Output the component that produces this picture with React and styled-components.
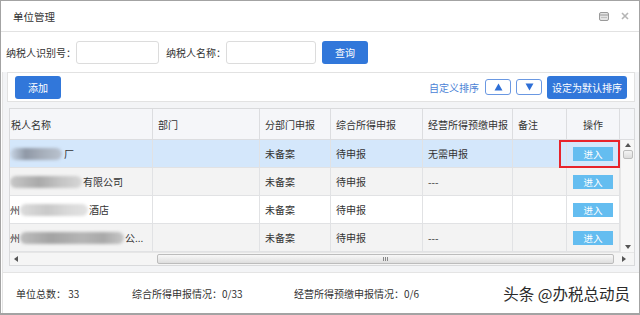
import React from "react";
import styled, { createGlobalStyle } from "styled-components";

const GlobalStyle = createGlobalStyle`
  html, body { margin: 0; padding: 0; background: #fff; }
  body { font-family: "Noto Sans CJK SC", "Noto Sans", sans-serif; }
  * { box-sizing: border-box; }
`;

const Frame = styled.div`
  width: 640px;
  height: 315px;
  border: 1px solid #a3a3a3;
  border-bottom-width: 2px;
  background: #fff;
  display: flex;
  flex-direction: column;
  color: #333;
  font-size: 10px;
  overflow: hidden;
`;

const TitleBar = styled.div`
  height: 31px;
  flex: none;
  border-bottom: 1px solid #e2e2e2;
  display: flex;
  align-items: center;
  justify-content: space-between;
  padding: 0 10px 0 12px;
`;

const Title = styled.span`
  font-size: 10.5px;
  color: #333;
`;

const TitleIcons = styled.div`
  display: flex;
  align-items: center;
  gap: 12px;
`;

const SearchRow = styled.div`
  height: 40px;
  flex: none;
  display: flex;
  align-items: center;
  padding: 0 5px;
`;

const Label = styled.span`
  font-size: 10px;
  color: #333;
  margin-left: ${(p) => p.$ml || 0}px;
`;

const Input = styled.div`
  width: ${(p) => p.$w}px;
  height: 23px;
  border: 1px solid #dcdcdc;
  border-radius: 3px;
  background: #fff;
`;

const BlueButton = styled.button`
  height: 23px;
  padding: 0 ${(p) => p.$px || 14}px;
  margin-left: ${(p) => p.$ml || 0}px;
  border: none;
  border-radius: 3px;
  background: #3177da;
  color: #fff;
  font-family: inherit;
  font-size: 10px;
  line-height: 23px;
`;

const Content = styled.div`
  flex: 1;
  display: flex;
  flex-direction: column;
  margin-left: 1px;
  border-left: 1px solid #e4e4e4;
  background: #f3f4f6;
`;

const Toolbar = styled.div`
  height: 30px;
  flex: none;
  margin: 0 4px 0 4px;
  border: 1px solid #e2e2e2;
  background: #fff;
  display: flex;
  align-items: center;
  padding: 0 7px;
`;

const Spacer = styled.div`
  flex: 1;
`;

const SortLabel = styled.span`
  color: #4b82d6;
  font-size: 10px;
  margin-right: 6px;
`;

const ArrowButton = styled.div`
  width: 26px;
  height: 16px;
  border: 1px solid #6a98e2;
  border-radius: 3px;
  background: #fff;
  display: flex;
  align-items: center;
  justify-content: center;
  margin-right: 5px;
`;

const TableBox = styled.div`
  margin: 6px 4px 0 6px;
  height: 158px;
  flex: none;
  border: 1px solid #d9dadc;
  background: #fff;
  display: flex;
  flex-direction: column;
`;

const HeadRow = styled.div`
  height: 31px;
  flex: none;
  display: flex;
  background: #f5f6f9;
  border-bottom: 1px solid #dcdde0;
`;

const HeadCell = styled.div`
  width: ${(p) => p.$w}px;
  flex: none;
  border-right: 1px solid #dcdde0;
  display: flex;
  align-items: center;
  justify-content: ${(p) => (p.$center ? "center" : "flex-start")};
  padding-left: ${(p) => (p.$center ? 0 : p.$pl ?? 5)}px;
  white-space: nowrap;
  overflow: hidden;
  font-size: 10px;
  color: #333;
`;

const Body = styled.div`
  flex: 1;
  display: flex;
  min-height: 0;
`;

const Rows = styled.div`
  width: 610px;
  flex: none;
  display: flex;
  flex-direction: column;
`;

const Row = styled.div`
  height: 28px;
  flex: none;
  display: flex;
  background: ${(p) => p.$bg};
  border-bottom: 1px solid #e1e2e4;
`;

const Cell = styled.div`
  width: ${(p) => p.$w}px;
  flex: none;
  border-right: 1px solid #e1e2e4;
  display: flex;
  align-items: center;
  justify-content: ${(p) => (p.$center ? "center" : "flex-start")};
  padding-left: ${(p) => (p.$center ? 0 : p.$pl ?? 5)}px;
  white-space: nowrap;
  overflow: ${(p) => (p.$visible ? "visible" : "hidden")};
  position: relative;
  font-size: 10px;
  color: #333;
`;

const Blur = styled.span`
  display: inline-block;
  width: ${(p) => p.$w}px;
  height: 12px;
  border-radius: 6px;
  background: ${(p) => p.$bg};
  filter: blur(1.6px);
  flex: none;
`;

const Gap = styled.span`
  display: inline-block;
  width: ${(p) => p.$w}px;
  height: ${(p) => p.$h || 0}px;
  flex: none;
`;

const EnterButton = styled.div`
  width: 40px;
  height: 14px;
  background: #64bdf0;
  color: #fff;
  font-size: 9.5px;
  line-height: 14px;
  text-align: center;
`;

const RedBox = styled.div`
  position: absolute;
  left: -8px;
  top: 0px;
  width: 61px;
  height: 28px;
  border: 2px solid #e8232b;
  pointer-events: none;
`;

const VScroll = styled.div`
  width: 14px;
  flex: none;
  background: #f7f7f7;
  border-left: 1px solid #e6e6e6;
  display: flex;
  flex-direction: column;
  align-items: center;
  padding: 3px 0;
`;

const Thumb = styled.div`
  width: 10px;
  height: ${(p) => p.$h}px;
  border: 1px solid #bcbcbc;
  border-radius: 2px;
  background: linear-gradient(#f4f4f4, #dcdcdc);
`;

const HScroll = styled.div`
  height: 13px;
  flex: none;
  display: flex;
  align-items: center;
  background: #f5f5f5;
  border-top: 1px solid #e6e6e6;
  padding: 0 4px;
`;

const HThumb = styled.div`
  margin-left: 139px;
  width: 457px;
  height: 10px;
  border: 1px solid #bcbcbc;
  border-radius: 2px;
  background: linear-gradient(#f8f8f8, #dedede);
  display: flex;
  align-items: center;
  justify-content: center;
`;

const Footer = styled.div`
  margin-top: 6px;
  flex: 1;
  background: #fff;
  border-top: 1px solid #e4e4e4;
  display: flex;
  align-items: center;
  padding: 0 0 0 13px;
`;

const Stat = styled.span`
  font-size: 10px;
  color: #333;
  width: ${(p) => p.$w}px;
  flex: none;
`;

const Watermark = styled.span`
  margin-left: auto;
  margin-right: 9px;
  font-size: 15.5px;
  color: #2b2b2b;
  text-shadow: 0 0 2px #fff;
`;

const COLS = [143, 107, 71, 92, 90, 54, 53];

const Tri = ({ up }) => (
  <svg width="9" height="8" viewBox="0 0 9 8">
    <path d={up ? "M4.5 0.5 L8.5 7.5 L0.5 7.5 Z" : "M0.5 0.5 L8.5 0.5 L4.5 7.5 Z"} fill="#2e6fd6" />
  </svg>
);

const SmallTri = ({ dir }) => {
  const d = {
    up: "M0 4 L3 0 L6 4 Z",
    down: "M0 0 L6 0 L3 4 Z",
    left: "M4 0 L4 6 L0 3 Z",
    right: "M0 0 L0 6 L4 3 Z",
  }[dir];
  const w = dir === "left" || dir === "right" ? 4 : 6;
  const h = dir === "left" || dir === "right" ? 6 : 4;
  return (
    <svg width={w} height={h} viewBox={`0 0 ${w} ${h}`}>
      <path d={d} fill="#555" />
    </svg>
  );
};

const rows = [
  {
    bg: "#d4e7fb",
    name: (
      <>
        <Blur $w={52} $bg="linear-gradient(90deg,#c9d6e6,#8f98a6 30%,#a5adb9 60%,#b9c2cf)" />
        <Gap $w={2} />
        <span>厂</span>
      </>
    ),
    c3: "未备案",
    c4: "待申报",
    c5: "无需申报",
    sel: true,
  },
  {
    bg: "#f3f3f3",
    name: (
      <>
        <Blur $w={72} $bg="linear-gradient(90deg,#c8c8c8,#a9a9a9 40%,#c4c4c4 70%,#d6d6d6)" />
        <Gap $w={1} />
        <span>有限公司</span>
      </>
    ),
    c3: "未备案",
    c4: "待申报",
    c5: "---",
  },
  {
    bg: "#ffffff",
    name: (
      <>
        <span>州</span>
        <Blur $w={68} $bg="linear-gradient(90deg,#dcdcdc,#c9c9c9 40%,#d9d9d9 70%,#e2e2e2)" />
        <Gap $w={1} />
        <span>酒店</span>
      </>
    ),
    c3: "未备案",
    c4: "待申报",
    c5: "",
  },
  {
    bg: "#f3f3f3",
    name: (
      <>
        <span>州</span>
        <Blur $w={104} $bg="linear-gradient(90deg,#bdbdbd,#a3a3a3 30%,#b5b5b5 60%,#a9a9a9 80%,#c7c7c7)" />
        <Gap $w={1} />
        <span>公...</span>
      </>
    ),
    c3: "未备案",
    c4: "待申报",
    c5: "---",
  },
];

export default function App() {
  return (
    <>
      <GlobalStyle />
      <Frame>
        <TitleBar>
          <Title>单位管理</Title>
          <TitleIcons>
            <svg width="10" height="9" viewBox="0 0 10 9">
              <rect x="0.5" y="0.5" width="9" height="8" rx="1.5" fill="#e4e4e4" stroke="#9a9a9a" />
              <line x1="1" y1="3" x2="9" y2="3" stroke="#9a9a9a" />
              <line x1="2" y1="5.5" x2="8" y2="5.5" stroke="#c2c2c2" />
            </svg>
            <svg width="8" height="8" viewBox="0 0 8 8">
              <path d="M1 1 L7 7 M7 1 L1 7" stroke="#b5b5b5" strokeWidth="1.6" />
            </svg>
          </TitleIcons>
        </TitleBar>

        <SearchRow>
          <Label>纳税人识别号：</Label>
          <Input $w={83} />
          <Label $ml={7}>纳税人名称：</Label>
          <Input $w={90} />
          <BlueButton $ml={6} $px={13}>查询</BlueButton>
        </SearchRow>

        <Content>
          <Toolbar>
            <BlueButton $px={13}>添加</BlueButton>
            <Spacer />
            <SortLabel>自定义排序</SortLabel>
            <ArrowButton><Tri up /></ArrowButton>
            <ArrowButton><Tri /></ArrowButton>
            <BlueButton $px={5}>设定为默认排序</BlueButton>
          </Toolbar>

          <TableBox>
            <HeadRow>
              <HeadCell $w={COLS[0]} $pl={1}>税人名称</HeadCell>
              <HeadCell $w={COLS[1]}>部门</HeadCell>
              <HeadCell $w={COLS[2]}>分部门申报</HeadCell>
              <HeadCell $w={COLS[3]}>综合所得申报</HeadCell>
              <HeadCell $w={COLS[4]}>经营所得预缴申报</HeadCell>
              <HeadCell $w={COLS[5]}>备注</HeadCell>
              <HeadCell $w={COLS[6]} $center>操作</HeadCell>
            </HeadRow>
            <Body>
              <Rows>
                {rows.map((r, i) => (
                  <Row key={i} $bg={r.bg}>
                    <Cell $w={COLS[0]} $pl={0}>{r.name}</Cell>
                    <Cell $w={COLS[1]} />
                    <Cell $w={COLS[2]}>{r.c3}</Cell>
                    <Cell $w={COLS[3]}>{r.c4}</Cell>
                    <Cell $w={COLS[4]}>{r.c5}</Cell>
                    <Cell $w={COLS[5]} />
                    <Cell $w={COLS[6]} $center $visible>
                      <EnterButton>进入</EnterButton>
                      {r.sel && <RedBox />}
                    </Cell>
                  </Row>
                ))}
              </Rows>
              <VScroll>
                <SmallTri dir="up" />
                <Gap $w={1} $h={3} />
                <Thumb $h={9} />
                <Spacer />
                <SmallTri dir="down" />
              </VScroll>
            </Body>
            <HScroll>
              <SmallTri dir="left" />
              <HThumb>
                <svg width="6" height="4" viewBox="0 0 6 4">
                  <path d="M0.5 0 V4 M2.5 0 V4 M4.5 0 V4" stroke="#888" />
                </svg>
              </HThumb>
              <Gap $w={8} />
              <SmallTri dir="right" />
            </HScroll>
          </TableBox>

          <Footer>
            <Stat $w={116}>单位总数： 33</Stat>
            <Stat $w={162}>综合所得申报情况：0/33</Stat>
            <Stat $w={150}>经营所得预缴申报情况：0/6</Stat>
            <Watermark>头条 @办税总动员</Watermark>
          </Footer>
        </Content>
      </Frame>
    </>
  );
}
